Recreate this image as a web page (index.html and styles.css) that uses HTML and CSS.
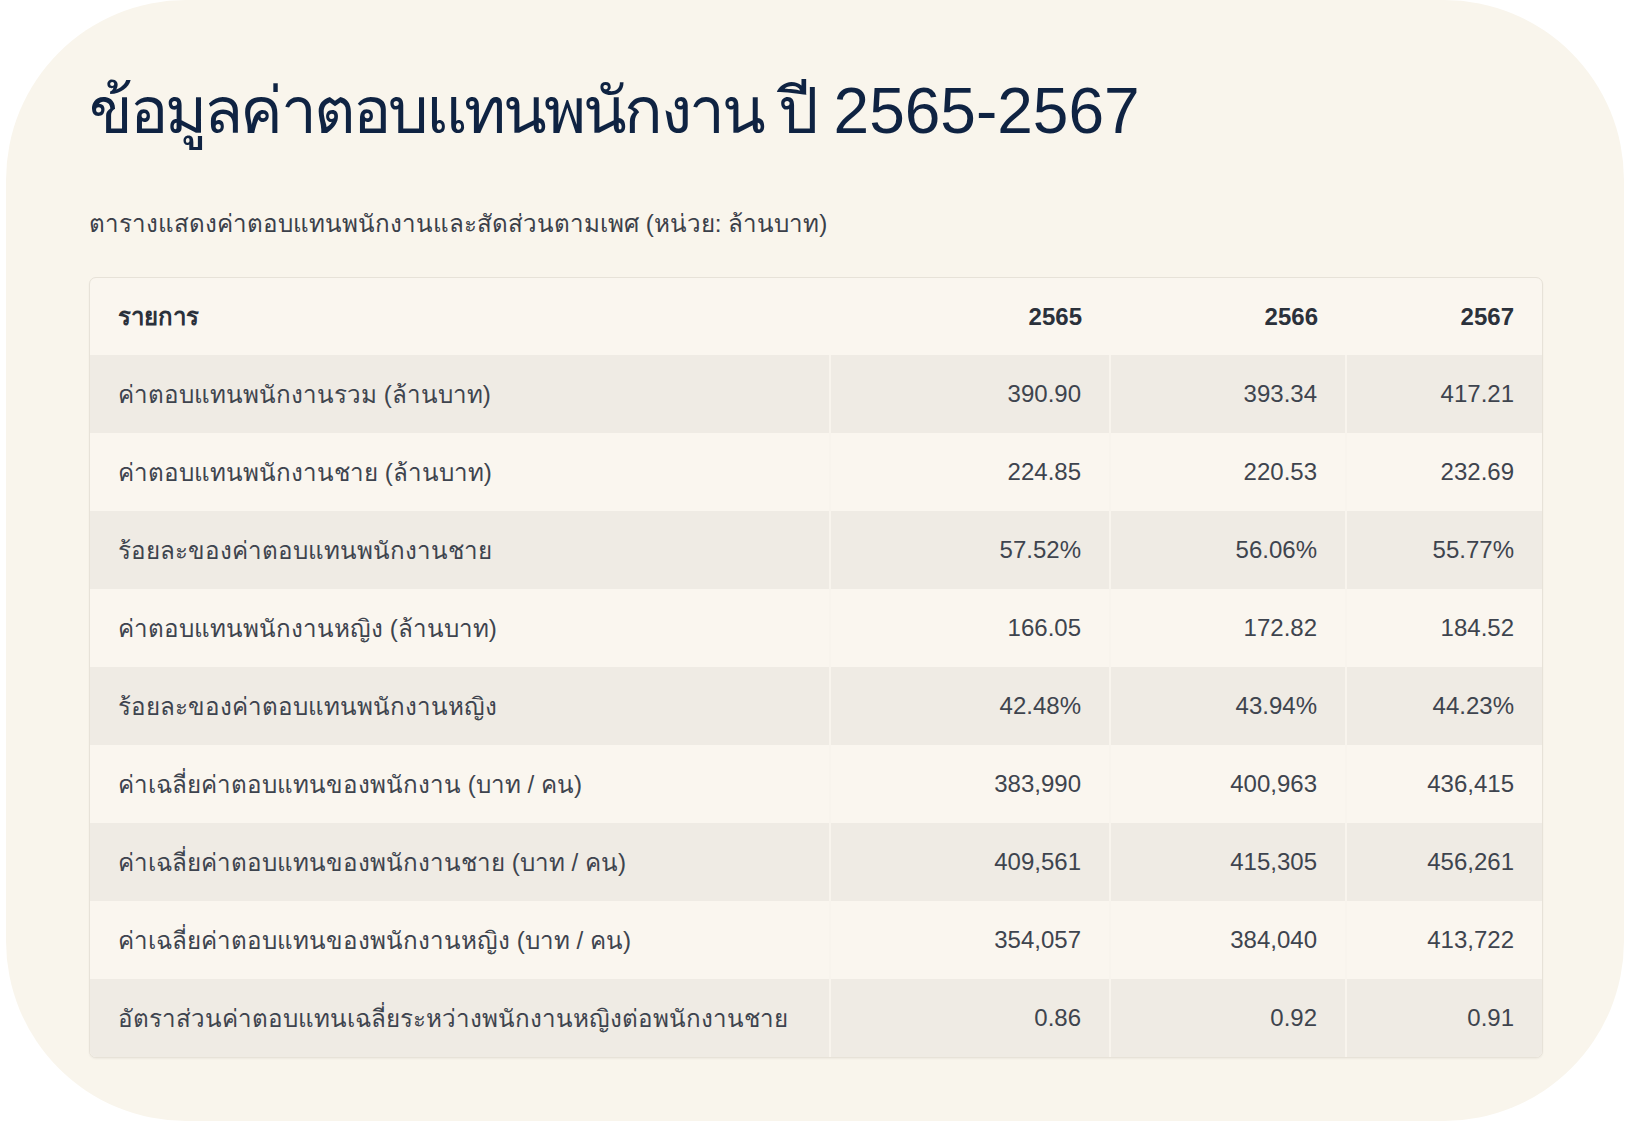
FILE: index.html
```html
<!DOCTYPE html>
<html lang="th">
<head>
<meta charset="utf-8">
<title>ข้อมูลค่าตอบแทนพนักงาน ปี 2565-2567</title>
<link rel="stylesheet" href="styles.css">
</head>
<body>
<main class="card">
  <h1 class="title"><span class="title-th">ข้อมูลค่าตอบแทนพนักงาน ปี</span> 2565-2567</h1>
  <p class="subtitle">ตารางแสดงค่าตอบแทนพนักงานและสัดส่วนตามเพศ (หน่วย: ล้านบาท)</p>
  <div class="table-wrap">
    <table class="data">
      <colgroup>
        <col class="c-label">
        <col class="c-y1">
        <col class="c-y2">
        <col class="c-y3">
      </colgroup>
      <thead>
        <tr><th class="lbl">รายการ</th><th>2565</th><th>2566</th><th>2567</th></tr>
      </thead>
      <tbody>
        <tr><td class="lbl">ค่าตอบแทนพนักงานรวม (ล้านบาท)</td><td>390.90</td><td>393.34</td><td>417.21</td></tr>
        <tr><td class="lbl">ค่าตอบแทนพนักงานชาย (ล้านบาท)</td><td>224.85</td><td>220.53</td><td>232.69</td></tr>
        <tr><td class="lbl">ร้อยละของค่าตอบแทนพนักงานชาย</td><td>57.52%</td><td>56.06%</td><td>55.77%</td></tr>
        <tr><td class="lbl">ค่าตอบแทนพนักงานหญิง (ล้านบาท)</td><td>166.05</td><td>172.82</td><td>184.52</td></tr>
        <tr><td class="lbl">ร้อยละของค่าตอบแทนพนักงานหญิง</td><td>42.48%</td><td>43.94%</td><td>44.23%</td></tr>
        <tr><td class="lbl">ค่าเฉลี่ยค่าตอบแทนของพนักงาน (บาท / คน)</td><td>383,990</td><td>400,963</td><td>436,415</td></tr>
        <tr><td class="lbl">ค่าเฉลี่ยค่าตอบแทนของพนักงานชาย (บาท / คน)</td><td>409,561</td><td>415,305</td><td>456,261</td></tr>
        <tr><td class="lbl">ค่าเฉลี่ยค่าตอบแทนของพนักงานหญิง (บาท / คน)</td><td>354,057</td><td>384,040</td><td>413,722</td></tr>
        <tr><td class="lbl">อัตราส่วนค่าตอบแทนเฉลี่ยระหว่างพนักงานหญิงต่อพนักงานชาย</td><td>0.86</td><td>0.92</td><td>0.91</td></tr>
      </tbody>
    </table>
  </div>
</main>
</body>
</html>
```

FILE: styles.css
```css
html, body {
  margin: 0;
  padding: 0;
  background: #ffffff;
}

body {
  font-family: "Liberation Sans", Arial, sans-serif;
}

.card {
  box-sizing: border-box;
  margin: 0 6px;
  height: 1121px;
  background: #f9f5ec;
  border-radius: 180px;
  padding: 73px 81px 0 83px;
}

.title {
  margin: 0;
  font-size: 64px;
  line-height: 77px;
  font-weight: 400;
  color: #0f2342;
}

.title-th {
  letter-spacing: -2.9px;
}

.subtitle {
  margin: 56px 0 0;
  font-size: 24.2px;
  line-height: 36px;
  color: #3b4049;
}

.table-wrap {
  margin-top: 35px;
  border: 1px solid #e7e2d8;
  border-radius: 7px;
  overflow: hidden;
  box-shadow: 0 1px 2px rgba(0, 0, 0, 0.05);
  background: #faf6ef;
}

.data {
  width: 100%;
  border-collapse: collapse;
  table-layout: fixed;
  font-size: 24px;
  color: #3e444e;
}

.c-label { width: 740px; }
.c-y1 { width: 280px; }
.c-y2 { width: 236px; }
.c-y3 { width: auto; }

.data th,
.data td {
  height: 78px;
  padding: 0 28px;
  text-align: right;
  vertical-align: middle;
  box-sizing: border-box;
  white-space: nowrap;
}

.data th {
  font-weight: 700;
  color: #2b313b;
  height: 77px;
}

.data .lbl {
  text-align: left;
}

.data td.lbl {
  font-size: 24.2px;
}

.data td + td {
  border-left: 2px solid #f8f4ed;
}

.data tbody tr:nth-child(odd) {
  background: #efebe4;
}

.data tbody tr:nth-child(even) {
  background: #faf6ef;
}
```
